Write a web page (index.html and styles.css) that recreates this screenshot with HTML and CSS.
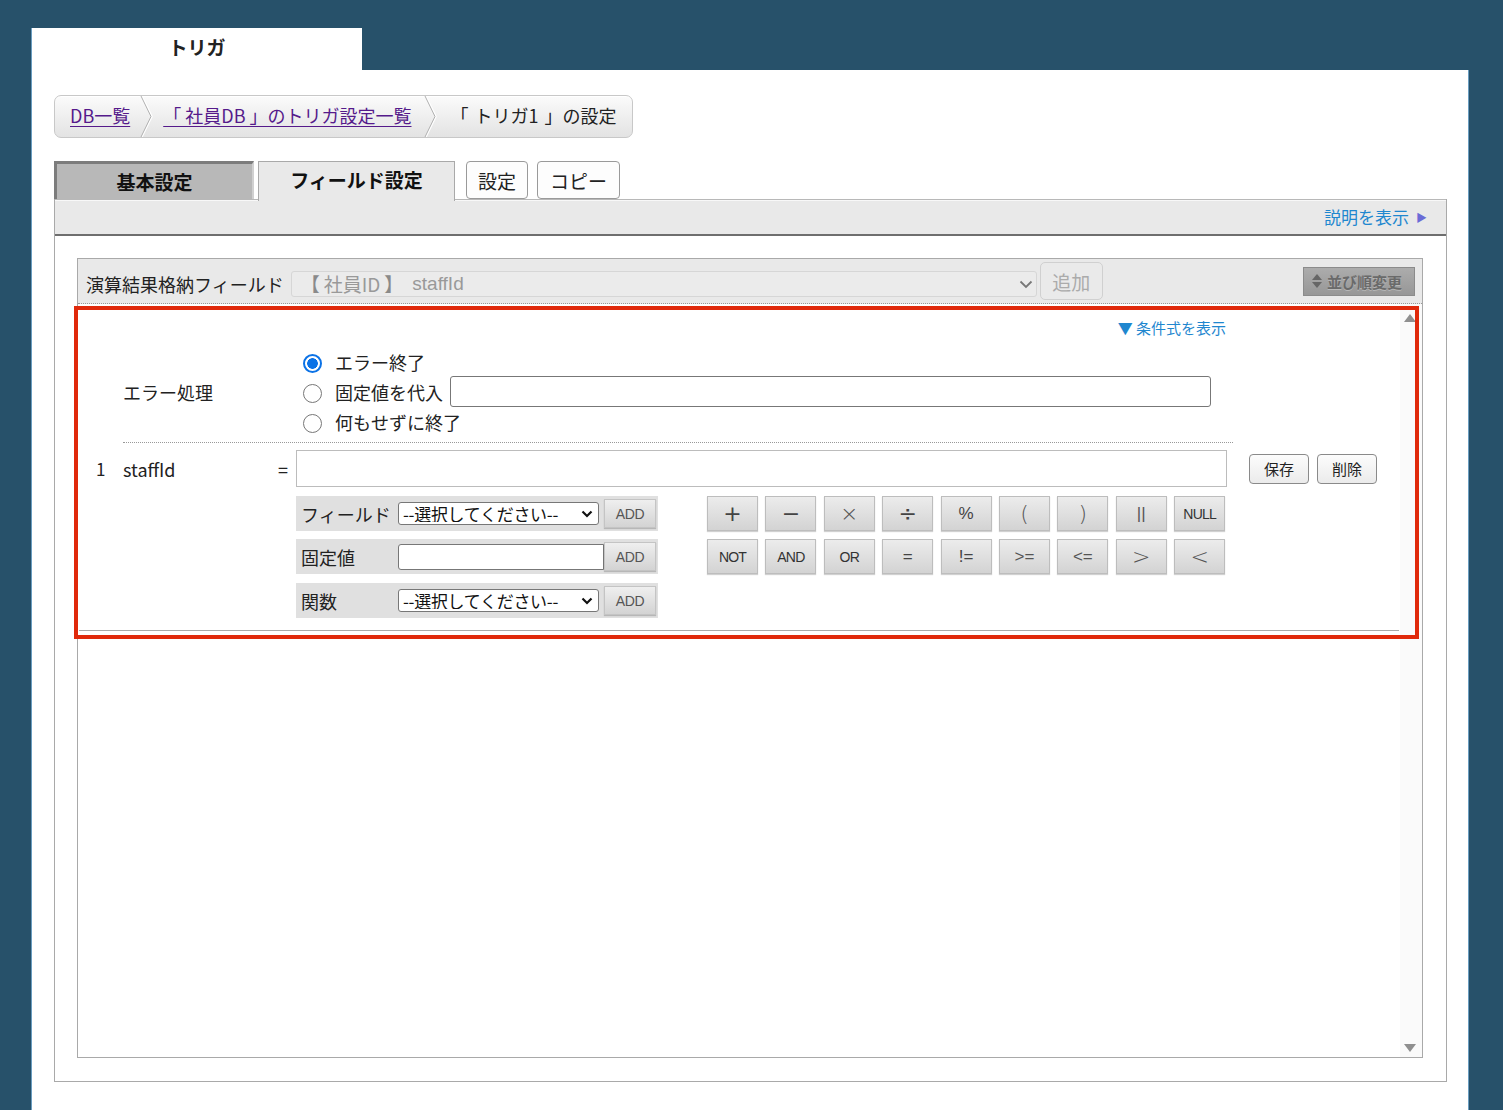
FILE: index.html
```html
<!DOCTYPE html>
<html lang="ja">
<head>
<meta charset="utf-8">
<title>トリガ</title>
<link rel="stylesheet" href="styles.css">
</head>
<body>
<div class="page">
  <div class="app-tab">トリガ</div>
  <div class="sheet">
    <nav class="crumbs">
      <a href="#" class="crumb-link">DB一覧</a>
      <svg class="chev" width="14" height="41" viewBox="0 0 14 41"><polyline points="2,0 12,20.5 2,41" fill="none" stroke="#fff" stroke-width="1.5"/><polyline points="1,0 11,20.5 1,41" fill="none" stroke="#b0b0b0" stroke-width="1"/></svg>
      <a href="#" class="crumb-link">「 社員DB 」のトリガ設定一覧</a>
      <svg class="chev chev-2" width="14" height="41" viewBox="0 0 14 41"><polyline points="2,0 12,20.5 2,41" fill="none" stroke="#fff" stroke-width="1.5"/><polyline points="1,0 11,20.5 1,41" fill="none" stroke="#b0b0b0" stroke-width="1"/></svg>
      <span class="crumb-current">「 トリガ1 」の設定</span>
    </nav>

    <div class="tabs">
      <div class="tab tab-off">基本設定</div>
      <div class="tab tab-on">フィールド設定</div>
      <button class="tab-btn">設定</button>
      <button class="tab-btn tab-btn-copy">コピー</button>
    </div>

    <div class="panel">
      <div class="panel-bar">
        <a href="#" class="help">説明を表示<span class="tri">▶</span></a>
      </div>
      <div class="panel-body">
        <div class="box">
          <div class="box-head">
            <span class="head-label">演算結果格納フィールド</span>
            <div class="fake-select">
              <span class="bracket">【</span><span class="sel-text">社員ID</span><span class="bracket">】</span><span class="sel-name">staffId</span>
              <svg class="sel-chev" width="14" height="9" viewBox="0 0 14 9"><polyline points="1.5,1.5 7,7 12.5,1.5" fill="none" stroke="#777" stroke-width="1.8"/></svg>
            </div>
            <button class="add-btn" disabled>追加</button>
            <button class="sort-btn"><span class="sort-ico"><span class="s-up"></span><span class="s-down"></span></span>並び順変更</button>
          </div>

          <div class="box-scroll">
            <div class="list">
              <div class="item">
                <div class="toggle-row"><a href="#" class="toggle">▼ 条件式を表示</a></div>

                <div class="error-row">
                  <div class="error-label">エラー処理</div>
                  <div class="radios">
                    <label class="radio-line"><input type="radio" name="err" class="radio" checked>エラー終了</label>
                    <label class="radio-line with-input"><input type="radio" name="err" class="radio">固定値を代入<input type="text" class="fixed-input"></label>
                    <label class="radio-line"><input type="radio" name="err" class="radio">何もせずに終了</label>
                  </div>
                </div>

                <div class="sep"></div>

                <div class="expr">
                  <div class="num">1</div>
                  <div class="fname">staffId</div>
                  <div class="eq">=</div>
                  <input type="text" class="expr-input">
                  <div class="actions">
                    <button class="act-btn">保存</button>
                    <button class="act-btn">削除</button>
                  </div>

                  <div class="palette">
                    <div class="pal-left">
                      <div class="pal-row">
                        <span class="pal-label">フィールド</span>
                        <span class="sel-wrap">
                          <select class="pal-select"><option>--選択してください--</option></select>
                          <svg class="pal-chev" width="12" height="8" viewBox="0 0 12 8"><polyline points="1.5,1.5 6,6 10.5,1.5" fill="none" stroke="#111" stroke-width="2.2"/></svg>
                        </span>
                        <button class="add-small">ADD</button>
                      </div>
                      <div class="pal-row">
                        <span class="pal-label">固定値</span>
                        <input type="text" class="pal-input">
                        <button class="add-small add-join">ADD</button>
                      </div>
                      <div class="pal-row pal-row-last">
                        <span class="pal-label">関数</span>
                        <span class="sel-wrap">
                          <select class="pal-select"><option>--選択してください--</option></select>
                          <svg class="pal-chev" width="12" height="8" viewBox="0 0 12 8"><polyline points="1.5,1.5 6,6 10.5,1.5" fill="none" stroke="#111" stroke-width="2.2"/></svg>
                        </span>
                        <button class="add-small">ADD</button>
                      </div>
                    </div>

                    <div class="ops">
                      <button class="op op-sym">+</button>
                      <button class="op op-sym">−</button>
                      <button class="op op-sym op-light">×</button>
                      <button class="op op-sym">÷</button>
                      <button class="op">%</button>
                      <button class="op op-sym op-light">(</button>
                      <button class="op op-sym op-light">)</button>
                      <button class="op op-light">||</button>
                      <button class="op op-word">NULL</button>
                      <button class="op op-word">NOT</button>
                      <button class="op op-word">AND</button>
                      <button class="op op-word">OR</button>
                      <button class="op">=</button>
                      <button class="op">!=</button>
                      <button class="op op-light">&gt;=</button>
                      <button class="op op-light">&lt;=</button>
                      <button class="op op-sym op-light">&gt;</button>
                      <button class="op op-sym op-light">&lt;</button>
                    </div>
                  </div>
                </div>
              </div>
            </div>
            <div class="vscroll"><span class="v-up"></span><span class="v-down"></span></div>
            <div class="highlight"></div>
          </div>
        </div>
      </div>
    </div>
  </div>
</div>
</body>
</html>
```

FILE: styles.css
```css
* { box-sizing: border-box; }

body {
  margin: 0;
  background: #27516a;
  font-family: "Noto Sans CJK JP", "Noto Sans", sans-serif;
  color: #222;
  overflow: hidden;
}

button, input, select {
  font-family: "Noto Sans CJK JP", "Noto Sans", sans-serif;
}

.page {
  padding: 28px 0 0 31px;
  width: 1469px;
}

.app-tab {
  width: 331px;
  height: 42px;
  background: #fff;
  border-left: 1px solid #6a9dc0;
  display: flex;
  align-items: center;
  justify-content: center;
  font-weight: 700;
  font-size: 19px;
  color: #222;
  padding-bottom: 6px;
}

.sheet {
  width: 1438px;
  height: 1040px;
  background: #fff;
  border-left: 1px solid #6a9dc0;
  border-right: 1px solid #6a9dc0;
  padding: 25px 0 0 22px;
}

/* breadcrumb */
.crumbs {
  display: inline-flex;
  align-items: center;
  height: 43px;
  border: 1px solid #c8c8c8;
  border-radius: 7px;
  background: linear-gradient(#fbfbfb, #e3e3e3);
  padding: 0 15px 4px 15px;
  font-size: 18px;
  line-height: 1;
  box-shadow: inset 0 1px 0 #fff;
}
.crumbs .chev { align-self: flex-start; margin-bottom: -4px; }
.crumb-link {
  color: #551a8b;
  text-decoration: underline;
  text-underline-offset: 3px;
}
.chev { display: block; margin: 0 9px 0 10px; }
.chev-2 { margin: 0 13px 0 12px; }
.crumb-current { color: #222; word-spacing: 2px; }

/* tabs */
.tabs {
  margin-top: 23px;
  display: flex;
  align-items: flex-start;
  height: 38px;
  position: relative;
  z-index: 2;
}
.tab {
  display: flex;
  align-items: center;
  justify-content: center;
  font-weight: 700;
  font-size: 19px;
  color: #111;
}
.tab-off {
  width: 200px;
  height: 38px;
  background: #b8b8b8;
  border-top: 3px solid #7c7c7c;
  border-left: 3px solid #7c7c7c;
  border-right: 2px solid #d0d0d0;
  padding-bottom: 1px;
}
.tab-on {
  margin-left: 4px;
  width: 197px;
  height: 40px;
  background: #e9e9e9;
  border: 1px solid #a9a9a9;
  border-bottom: none;
  padding-bottom: 4px;
}
.tab-btn {
  margin-left: 11px;
  height: 38px;
  padding: 0 11px;
  border: 1px solid #9a9a9a;
  border-radius: 4px;
  background: #fdfdfd;
  font-size: 19px;
  color: #222;
}
.tab-btn-copy { margin-left: 9px; padding: 0 12px; }

/* panel */
.panel {
  width: 1393px;
  height: 883px;
  border: 1px solid #a9a9a9;
  border-top: none;
}
.panel-bar {
  height: 37px;
  background: #e9e9e9;
  border-top: 1px solid #b8b8b8;
  border-bottom: 2px solid #6e6e6e;
  display: flex;
  justify-content: flex-end;
  align-items: center;
  padding-right: 19px;
  padding-bottom: 2px;
  box-shadow: inset 0 1px 0 #f8f8f8;
}
.help {
  color: #1f87cf;
  font-size: 17px;
  text-decoration: none;
}
.tri {
  color: #6b6bd6;
  font-size: 11px;
  margin-left: 7px;
  position: relative;
  top: -2px;
}
.panel-body {
  padding: 22px 23px 0 22px;
}

/* box */
.box {
  width: 1346px;
  height: 800px;
  border: 1px solid #a9a9a9;
  display: flex;
  flex-direction: column;
}
.box-head {
  height: 45px;
  flex: none;
  background: #e9e9e9;
  border-bottom: 1px dotted #999;
  display: flex;
  align-items: center;
  padding: 0 7px 0 8px;
}
.head-label {
  font-size: 18px;
  margin-right: 7px;
  color: #222;
  padding-top: 5px;
}
.fake-select {
  position: relative;
  width: 746px;
  height: 26px;
  margin-top: 5px;
  border: 1px solid #d6d6d6;
  border-radius: 3px;
  background: #ebebeb;
  color: #999;
  font-size: 19px;
  display: flex;
  align-items: center;
  padding-left: 9px;
  line-height: 1;
}
.bracket { color: #8a8a8a; }
.sel-text { margin: 0 4px; }
.sel-name { margin-left: 9px; font-family: "Liberation Sans", sans-serif; }
.sel-chev { position: absolute; right: 3px; top: 8px; }
.add-btn {
  margin-left: 3px;
  width: 63px;
  height: 38px;
  border: 1px solid #d0d0d0;
  border-radius: 5px;
  background: #eaeaea;
  color: #ababab;
  font-size: 19px;
  padding: 0;
}
.sort-btn {
  margin-left: auto;
  width: 112px;
  height: 29px;
  border: 1px solid #8b8b8b;
  background: linear-gradient(#acacac, #979797);
  color: #6a6a6a;
  font-size: 15px;
  font-weight: 700;
  display: flex;
  align-items: center;
  justify-content: center;
  gap: 5px;
  padding: 0 4px 0 0;
  text-shadow: 0 1px 0 #b8b8b8;
}
.sort-ico { display: flex; flex-direction: column; gap: 2px; }
.s-up, .s-down {
  display: block;
  width: 0; height: 0;
  border-left: 5px solid transparent;
  border-right: 5px solid transparent;
}
.s-up { border-bottom: 6px solid #666; }
.s-down { border-top: 6px solid #666; }

/* scroll area */
.box-scroll {
  flex: 1;
  display: flex;
  position: relative;
  background: #fff;
}
.list { flex: 1; }
.vscroll {
  width: 22px;
  flex: none;
  background: #fafafa;
  position: relative;
}
.v-up, .v-down {
  position: absolute;
  left: 4px;
  width: 0; height: 0;
  border-left: 6px solid transparent;
  border-right: 6px solid transparent;
}
.v-up { top: 10px; border-bottom: 8px solid #8f8f8f; }
.v-down { bottom: 5px; border-top: 8px solid #8f8f8f; }
.highlight {
  position: absolute;
  left: -4px;
  top: 2px;
  width: 1345px;
  height: 333px;
  border: 4px solid #e0290b;
  pointer-events: none;
  z-index: 3;
}

/* item */
.item {
  padding: 14px 0 12px 0;
  border-bottom: 1px solid #a9a9a9;
  margin-left: 1px;
  margin-right: 1px;
}
.toggle-row {
  height: 20px;
  display: flex;
  justify-content: flex-end;
  padding-right: 173px;
  line-height: 20px;
}
.toggle {
  color: #1f87cf;
  font-size: 15px;
  text-decoration: none;
}
.error-row {
  margin-top: 9px;
  display: flex;
  align-items: center;
  padding-left: 44px;
}
.error-label {
  width: 180px;
  font-size: 18px;
}
.radios { display: flex; flex-direction: column; }
.radio-line {
  display: flex;
  align-items: center;
  height: 29px;
  font-size: 18px;
  color: #222;
}
.radio-line.with-input { height: 31px; }
.radio {
  appearance: none;
  -webkit-appearance: none;
  width: 19px;
  height: 19px;
  margin: 3px 13px 0 0;
  border: 1.5px solid #777;
  border-radius: 50%;
  background: #fff;
}
.radio:checked {
  border: 2px solid #0b72e6;
  background: radial-gradient(circle, #0b72e6 0 5px, #fff 5.6px);
}
.fixed-input {
  margin-left: 7px;
  width: 761px;
  height: 31px;
  border: 1px solid #777;
  border-radius: 3px;
  background: #fff;
}
.sep {
  margin: 6px 0 0 44px;
  width: 1110px;
  border-top: 1px dotted #999;
}

/* expression */
.expr {
  margin-top: 7px;
  padding-left: 17px;
  display: grid;
  grid-template-columns: 27px 155px 18px 931px auto;
  align-items: center;
}
.num { font-size: 17px; }
.fname { font-size: 18px; }
.eq { font-size: 18px; }
.expr-input {
  width: 931px;
  height: 37px;
  border: 1px solid #bcbcbc;
  background: #fff;
}
.actions {
  padding-left: 22px;
  display: flex;
  gap: 8px;
}
.act-btn {
  width: 60px;
  height: 30px;
  border: 1px solid #8a8a8a;
  border-radius: 4px;
  background: linear-gradient(#fcfcfc, #ebebeb);
  font-size: 15px;
  color: #222;
  padding: 0;
}

.palette {
  grid-column: 4 / 6;
  margin-top: 9px;
  display: flex;
  gap: 49px;
  align-items: flex-start;
}
.pal-left {
  width: 362px;
  display: flex;
  flex-direction: column;
  gap: 8px;
}
.pal-row {
  height: 35px;
  background: #e0e0e0;
  display: flex;
  align-items: center;
  padding-left: 5px;
}
.pal-row-last { margin-top: 1px; }
.pal-label {
  width: 97px;
  font-size: 18px;
  color: #222;
}
.sel-wrap { position: relative; display: block; height: 23px; }
.pal-select {
  appearance: none;
  -webkit-appearance: none;
  width: 201px;
  height: 23px;
  border: 1px solid #777;
  border-radius: 3px;
  background: #fff;
  font-size: 17px;
  line-height: 1;
  padding: 0 0 0 4px;
  color: #111;
  letter-spacing: -0.3px;
}
.pal-chev { position: absolute; right: 6px; top: 8px; pointer-events: none; }
.pal-input {
  width: 206px;
  height: 26px;
  border: 1px solid #777;
  border-radius: 3px 0 0 3px;
  background: #fff;
}
.add-small {
  margin-left: 5px;
  width: 52px;
  height: 29px;
  border: 1px solid #c4c4c4;
  background: linear-gradient(#efefef, #d3d3d3);
  box-shadow: 0 1px 1px rgba(0,0,0,0.18);
  color: #555;
  font-family: "Liberation Sans", sans-serif;
  font-size: 14px;
  letter-spacing: -0.3px;
  padding: 0;
}
.add-join { margin-left: 0; }

.ops {
  display: grid;
  grid-template-columns: repeat(9, 51px);
  column-gap: 7.4px;
  row-gap: 8px;
}
.op {
  height: 35px;
  border: 1px solid #bdbdbd;
  background: linear-gradient(#ececec, #d3d3d3);
  box-shadow: 0 1px 1px rgba(0,0,0,0.18);
  color: #444;
  font-family: "Liberation Sans", sans-serif;
  font-size: 17px;
  padding: 0;
}
.op-sym { font-size: 22px; font-family: "DejaVu Sans", sans-serif; line-height: 1; }
.op-light { font-weight: 300; color: #555; }
.op-word { font-size: 14px; letter-spacing: -0.8px; color: #333; }
```
